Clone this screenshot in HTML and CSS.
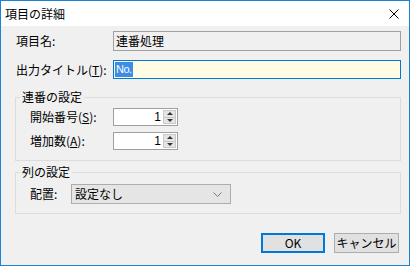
FILE: index.html
```html
<!DOCTYPE html>
<html lang="ja">
<head>
  <meta charset="UTF-8">
  <title>項目の詳細</title>
  <link rel="stylesheet" href="styles.css">
</head>
<body>
  <div class="window">
    <div class="titlebar">
      <span class="title">項目の詳細</span>
      <svg class="close" width="10" height="10" viewBox="0 0 10 10">
        <path d="M0.5 0.5 L9.5 9.5 M9.5 0.5 L0.5 9.5" stroke="#000" stroke-width="1" fill="none"/>
      </svg>
    </div>

    <div class="dialog">
      <div class="row">
        <label class="label">項目名:</label>
        <div class="field readonly">連番処理</div>
      </div>
      <div class="row row-title">
        <label class="label">出力タイトル(<u>T</u>):</label>
        <div class="field active"><span class="selected">No.</span></div>
      </div>

      <fieldset class="group group-seq">
        <legend>連番の設定</legend>
        <div class="row">
          <label class="label label-seq">開始番号(<u>S</u>):</label>
          <div class="spin">
            <span class="spin-value">1</span>
            <span class="spin-buttons">
              <span class="spin-btn"><i class="tri-up"></i></span>
              <span class="spin-btn"><i class="tri-down"></i></span>
            </span>
          </div>
        </div>
        <div class="row row-step">
          <label class="label label-seq">増加数(<u>A</u>):</label>
          <div class="spin">
            <span class="spin-value">1</span>
            <span class="spin-buttons">
              <span class="spin-btn"><i class="tri-up"></i></span>
              <span class="spin-btn"><i class="tri-down"></i></span>
            </span>
          </div>
        </div>
      </fieldset>

      <fieldset class="group group-col">
        <legend>列の設定</legend>
        <div class="row">
          <label class="label label-col">配置:</label>
          <div class="select">
            <span>設定なし</span>
            <svg width="9" height="5" viewBox="0 0 9 5">
              <path d="M0.5 0.5 L4.5 4.5 L8.5 0.5" stroke="#7a7a7a" stroke-width="1" fill="none"/>
            </svg>
          </div>
        </div>
      </fieldset>

      <div class="buttons">
        <button class="btn btn-default">OK</button>
        <button class="btn">キャンセル</button>
      </div>
    </div>
  </div>
</body>
</html>
```

FILE: styles.css
```css
* {
  box-sizing: border-box;
}
body {
  margin: 0;
  font-family: "Noto Sans CJK JP", "Liberation Sans", sans-serif;
  font-size: 12px;
  color: #000;
  background: #fff;
}
.window {
  width: 410px;
  height: 266px;
  border: 1px solid #1883d7;
  background: #f0f0f0;
  display: flex;
  flex-direction: column;
}
.titlebar {
  height: 25px;
  background: #fff;
  display: flex;
  align-items: center;
  justify-content: space-between;
  padding: 0 10px 0 4px;
}
.title {
  line-height: 16px;
}
.dialog {
  flex: 1;
  padding: 5px 8px 0 14px;
  display: flex;
  flex-direction: column;
}
.row {
  display: flex;
  align-items: center;
  padding-left: 1px;
}
.row-title {
  margin-top: 9px;
}
.label {
  width: 97px;
  line-height: 16px;
}
.field {
  flex: 1;
  height: 20px;
  padding: 0 2px;
  display: flex;
  align-items: center;
  line-height: 16px;
}
.readonly {
  background: #f0f0f0;
  border: 1px solid #a0a0a0;
}
.active {
  height: 19px;
  background: #fffce6;
  border: 1px solid #0078d7;
  padding-left: 1px;
}
.selected {
  background: #3a8ee6;
  color: #fff;
  font-family: "Liberation Sans Narrow", "Liberation Sans", sans-serif;
  font-size: 11px;
  letter-spacing: -0.5px;
  line-height: 15px;
  padding: 0 1px;
}
.group {
  margin: 0;
  border: 1px solid #dcdcdc;
  padding: 3px 10px 10px 14px;
}
.group legend {
  padding: 0 2px;
  margin-left: -10px;
  line-height: 16px;
}
.group-seq {
  margin-top: 10px;
}
.group-col {
  margin-top: 3px;
  padding-top: 4px;
  padding-bottom: 9px;
}
.group .row {
  padding-left: 0;
}
.row-step {
  margin-top: 6px;
}
.label-seq {
  width: 83px;
}
.label-col {
  width: 41px;
}
.spin {
  width: 65px;
  height: 18px;
  background: #fff;
  border: 1px solid #a0a0a0;
  display: flex;
  align-items: stretch;
}
.spin-value {
  flex: 1;
  text-align: right;
  font-family: "Liberation Sans", sans-serif;
  line-height: 16px;
  padding-right: 2px;
}
.spin-buttons {
  width: 13px;
  display: flex;
  flex-direction: column;
  margin: 1px 1px 1px 0;
}
.spin-btn {
  flex: 1;
  background: #e5e5e5;
  border: 1px solid #c8c8c8;
  display: flex;
  align-items: center;
  justify-content: center;
}
.spin-btn + .spin-btn {
  border-top: none;
}
.tri-up {
  border-left: 3px solid transparent;
  border-right: 3px solid transparent;
  border-bottom: 3px solid #333;
}
.tri-down {
  border-left: 3px solid transparent;
  border-right: 3px solid transparent;
  border-top: 3px solid #333;
}
.select {
  width: 160px;
  height: 20px;
  background: #e5e5e5;
  border: 1px solid #adadad;
  display: flex;
  align-items: center;
  justify-content: space-between;
  padding: 0 8px 0 3px;
  line-height: 16px;
}
.buttons {
  margin-top: 19px;
  display: flex;
  justify-content: flex-end;
  gap: 9px;
  padding-right: 2px;
}
.btn {
  height: 20px;
  background: #e1e1e1;
  border: 1px solid #adadad;
  font-family: "Noto Sans CJK JP", "Liberation Sans", sans-serif;
  font-size: 12px;
  line-height: 16px;
  padding: 0;
  width: 65px;
  color: #000;
}
.btn-default {
  border: 2px solid #0078d7;
  width: 64px;
}
```
